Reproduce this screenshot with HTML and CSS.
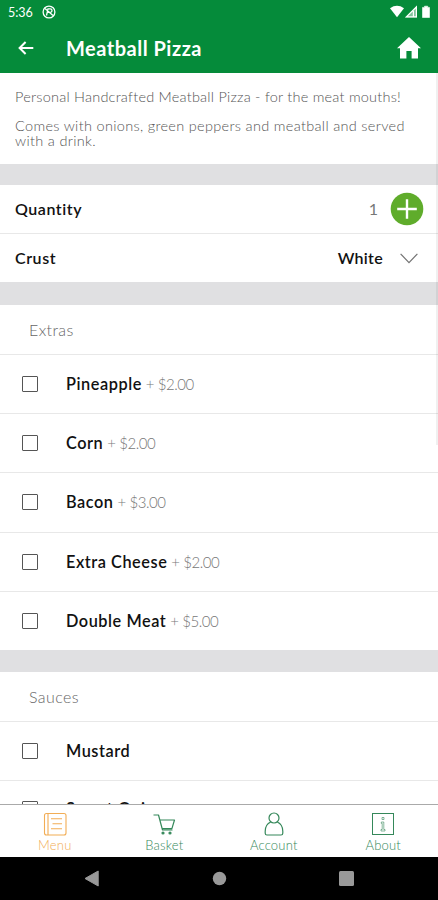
FILE: index.html
```html
<!DOCTYPE html>
<html lang="en">
<head>
  <meta charset="UTF-8" />
  <meta name="viewport" content="width=device-width, initial-scale=1.0"/>
  <title>Meatball Pizza</title>
  <link rel="stylesheet" href="styles.css">
</head>
<body>
  <header>
    <div class="status-bar">
      <span class="time">5:36</span>
      <svg class="status-app" width="14" height="14" viewBox="0 0 14 14" fill="none" stroke="currentColor">
        <circle cx="7" cy="7" r="5.9" stroke-width="1.3"/>
        <path d="M4.5 10.5L6 3.8h2.2a1.8 1.8 0 0 1 0 3.6H5.5M3 3.5l8 7" stroke-width="1.3"/>
      </svg>
      <svg class="status-icons" width="42" height="14" viewBox="0 0 42 14" fill="currentColor">
        <path d="M0 3.2Q7 -1.6 14 3.2L7 12.2Z"/>
        <path d="M27 .5V12.5H15Z" fill-opacity=".5"/>
        <path d="M26.4 2v9.9H16.4ZM23.4 6v6" fill="none" stroke="currentColor" stroke-width="1.2"/>
        <path d="M34.5 1.2h3.2v1.2h1.8v10.1h-7V2.4h2z" stroke="currentColor" stroke-width=".6" stroke-linejoin="round"/>
      </svg>
    </div>
    <div class="toolbar">
      <svg class="back" width="16" height="14" viewBox="0 0 16 14" fill="none" stroke="currentColor" stroke-width="2">
        <path d="M15.3 7H2M7.6 1L1.6 7l6 6"/>
      </svg>
      <h1>Meatball Pizza</h1>
      <svg class="home" width="24" height="22" viewBox="0 0 24 22" fill="currentColor">
        <path d="M12 0L24 11.3H21V21.5H14.6V14H9.4V21.5H3V11.3H0Z"/>
      </svg>
    </div>
  </header>

  <main>
    <div class="description">
      <p class="intro">Personal Handcrafted Meatball Pizza - for the meat mouths!</p>
      <p class="detail">Comes with onions, green peppers and meatball and served<br>with a drink.</p>
    </div>

    <div class="options">
      <div class="option">
        <span class="label">Quantity</span>
        <span class="count">1</span>
        <svg class="plus" width="34" height="34" viewBox="0 0 34 34">
          <circle cx="17" cy="17" r="16.3" fill="#5fac2b"/>
          <path d="M17 7.2v19.6M7.2 17h19.6" stroke="#fff" stroke-width="2.4"/>
        </svg>
      </div>
      <div class="option">
        <span class="label">Crust</span>
        <span class="choice">White</span>
        <svg class="chevron" width="18" height="11" viewBox="0 0 18 11" fill="none" stroke="#747474" stroke-width="1.2">
          <path d="M.6 .8L9 9.6L17.4 .8"/>
        </svg>
      </div>
    </div>

    <div class="group">
      <h2>Extras</h2>
      <div class="item"><span class="checkbox"></span><span class="name">Pineapple</span><span class="price">+ $2.00</span></div>
      <div class="item"><span class="checkbox"></span><span class="name">Corn</span><span class="price">+ $2.00</span></div>
      <div class="item"><span class="checkbox"></span><span class="name">Bacon</span><span class="price">+ $3.00</span></div>
      <div class="item"><span class="checkbox"></span><span class="name">Extra Cheese</span><span class="price">+ $2.00</span></div>
      <div class="item"><span class="checkbox"></span><span class="name">Double Meat</span><span class="price">+ $5.00</span></div>
    </div>

    <div class="group sauces">
      <h2>Sauces</h2>
      <div class="item"><span class="checkbox"></span><span class="name">Mustard</span></div>
      <div class="item"><span class="checkbox"></span><span class="name">Sweet Onion</span></div>
    </div>
    <div class="scrollbar"></div>
  </main>

  <nav class="tabs">
    <a class="tab active">
      <svg width="24" height="24" viewBox="0 0 24 24" fill="none" stroke="currentColor" stroke-width="1.1">
        <rect x="1.5" y="1.5" width="21.5" height="21.5" rx="2"/>
        <path d="M5 1.5V23M8 6.8h11M9.5 11.8h9.5M8 16.8h11"/>
      </svg>
      <span>Menu</span>
    </a>
    <a class="tab">
      <svg width="24" height="24" viewBox="0 0 24 24" fill="none" stroke="currentColor" stroke-width="1.2">
        <path d="M1.5 3h5l4 15h10M7.8 8h14.7l-2.6 8.6H10" stroke-linejoin="round"/>
        <circle cx="11" cy="21" r="1" fill="currentColor"/>
        <circle cx="18" cy="21" r="1" fill="currentColor"/>
      </svg>
      <span>Basket</span>
    </a>
    <a class="tab">
      <svg width="24" height="24" viewBox="0 0 24 24" fill="none" stroke="currentColor" stroke-width="1.2">
        <circle cx="12" cy="6" r="5"/>
        <path d="M8.7 10C5.2 11.6 3.2 15 3.2 19.3V21.2Q3.2 23 5 23H19Q20.8 23 20.8 21.2V19.3C20.8 15 18.8 11.6 15.3 10"/>
      </svg>
      <span>Account</span>
    </a>
    <a class="tab">
      <svg width="24" height="24" viewBox="0 0 24 24" fill="none" stroke="currentColor">
        <rect x="1.5" y="1.5" width="21" height="21"/>
        <path d="M11 5.5h2v2h-2zM10.3 10h2.5v7.5h1.2v1.5H10v-1.5h1.2V11.4h-.9z" stroke-width=".6"/>
      </svg>
      <span>About</span>
    </a>
  </nav>

  <footer>
    <svg width="15" height="17" viewBox="0 0 15 17"><path d="M14.2 1V16L1 8.5Z" stroke="#999" stroke-width="1" stroke-linejoin="round"/></svg>
    <svg width="15" height="15" viewBox="0 0 15 15"><circle cx="7.5" cy="7.5" r="6.7"/></svg>
    <svg width="15" height="15" viewBox="0 0 15 15"><rect width="15" height="15" rx="1.5"/></svg>
  </footer>
</body>
</html>
```
FILE: styles.css
```css
:root {
  --header-color: #058b3a;
  --tab-color: #35885a;
  --active-color: #f2ad55;
  --gap-color: #e0e0e2;
  --line-color: #e8e8e8;
}

* {
  box-sizing: border-box;
  margin: 0;
  padding: 0;
  font-family: Lato, 'Open Sans', sans-serif;
}

body {
  width: 438px;
  height: 900px;
  display: flex;
  flex-direction: column;
  overflow: hidden;
  background-color: white;
  color: #111;
}

svg {
  display: block;
  flex-shrink: 0;
}

header {
  height: 73px;
  background-color: var(--header-color);
  color: white;
}

.status-bar {
  display: flex;
  align-items: center;
  height: 24px;
  padding: 0 6px 0 8px;
}

.time {
  width: 34px;
  font-size: 12.5px;
}

.status-icons {
  margin-left: auto;
}

.toolbar {
  display: flex;
  align-items: center;
  height: 48px;
  padding: 0 17px 0 18px;
}

h1 {
  margin-left: 32px;
  font-size: 20px;
  font-weight: 700;
  letter-spacing: 0.5px;
}

.home {
  margin-left: auto;
}

main {
  position: relative;
  flex: 1;
  min-height: 0;
  overflow: hidden;
}

.description {
  height: 91px;
  padding: 16px 15px 0;
  font-size: 14.5px;
  font-weight: 300;
  line-height: 15px;
  color: #555;
  white-space: nowrap;
}

.intro {
  letter-spacing: 0.23px;
}

.detail {
  margin-top: 14px;
  letter-spacing: 0.32px;
}

.options {
  border-top: 21px solid var(--gap-color);
}

.option {
  display: flex;
  align-items: center;
  height: 48px;
  padding: 0 14px 0 15px;
  font-size: 16px;
}

.option + .option {
  height: 49px;
  padding-right: 20px;
  border-top: 1px solid var(--line-color);
}

.label,
.name,
.choice {
  font-weight: 600;
  letter-spacing: 0.55px;
}

.label,
.count,
.choice {
  padding-bottom: 1px;
}

.count {
  margin-left: auto;
  color: #777;
}

.plus {
  margin-left: 12px;
}

.choice {
  margin-left: auto;
  letter-spacing: 0.3px;
}

.chevron {
  margin-left: 17px;
}

.group {
  border-top: 23px solid var(--gap-color);
}

h2 {
  height: 49px;
  padding-left: 29px;
  font-size: 16px;
  font-weight: 300;
  line-height: 49px;
  letter-spacing: 0.4px;
  color: #666;
}

.item {
  display: flex;
  align-items: center;
  height: 59.2px;
  padding-left: 22px;
  border-top: 1px solid var(--line-color);
  font-size: 16.3px;
  line-height: 20px;
}

.checkbox {
  width: 16px;
  height: 16px;
  margin-right: 28px;
  border: 1.5px solid #555;
  border-radius: 1px;
}

.price {
  margin-left: 4px;
  font-size: 15px;
  font-weight: 300;
  letter-spacing: -0.45px;
  color: #777;
}

.sauces {
  border-top-width: 22px;
}

.sauces .item {
  height: 59px;
}

.sauces .item:last-child {
  height: 57px;
}

.scrollbar {
  position: absolute;
  top: 0;
  right: 0;
  width: 2px;
  height: 372px;
  background-color: rgba(0, 0, 0, 0.06);
}

.tabs {
  display: flex;
  height: 53px;
  border-top: 1px solid #aaa;
}

.tab {
  flex: 1;
  display: flex;
  flex-direction: column;
  align-items: center;
  padding-top: 7px;
  font-size: 13px;
  font-weight: 300;
  line-height: 18px;
  letter-spacing: 0.2px;
  color: var(--tab-color);
}

.tab.active {
  color: var(--active-color);
}

footer {
  display: flex;
  align-items: center;
  justify-content: space-between;
  height: 43px;
  padding: 0 84px;
  background-color: black;
  fill: #999;
}
```
